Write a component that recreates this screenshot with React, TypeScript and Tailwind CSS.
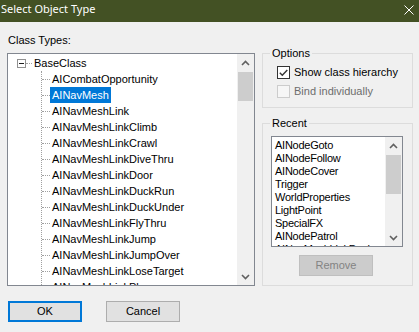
import React from "react";

const classTypes = [
  "AICombatOpportunity",
  "AINavMesh",
  "AINavMeshLink",
  "AINavMeshLinkClimb",
  "AINavMeshLinkCrawl",
  "AINavMeshLinkDiveThru",
  "AINavMeshLinkDoor",
  "AINavMeshLinkDuckRun",
  "AINavMeshLinkDuckUnder",
  "AINavMeshLinkFlyThru",
  "AINavMeshLinkJump",
  "AINavMeshLinkJumpOver",
  "AINavMeshLinkLoseTarget",
  "AINavMeshLinkPlayer",
];

const recent = [
  "AINodeGoto",
  "AINodeFollow",
  "AINodeCover",
  "Trigger",
  "WorldProperties",
  "LightPoint",
  "SpecialFX",
  "AINodePatrol",
  "AINavMeshLinkDuck",
];

const Chevron = ({ down }: { down?: boolean }) => (
  <svg width="9" height="6" viewBox="0 0 9 6">
    <polyline
      points={down ? "1,1 4.5,4.5 8,1" : "1,5 4.5,1.5 8,5"}
      fill="none"
      stroke="#606060"
      strokeWidth="1.6"
    />
  </svg>
);

// windows style vertical scrollbar, thumb placement passed in px
const ScrollBar = ({ thumbTop, thumbHeight }: { thumbTop: number; thumbHeight: number }) => (
  <div className="w-[17px] h-full bg-[#f0f0f0] flex flex-col shrink-0">
    <div className="h-[17px] flex items-center justify-center shrink-0">
      <Chevron />
    </div>
    <div className="flex-1 px-[1px]">
      <div className="bg-[#cdcdcd]" style={{ marginTop: thumbTop, height: thumbHeight }} />
    </div>
    <div className="h-[17px] flex items-center justify-center shrink-0">
      <Chevron down />
    </div>
  </div>
);

const App = () => {
  return (
    <div className="w-[419px] h-[332px] bg-[#f0f0f0] overflow-hidden flex flex-col font-['Liberation_Sans',Arial,sans-serif] text-[11px] text-black">
      {/* title bar */}
      <div className="h-[22px] bg-[#435124] flex items-center justify-between shrink-0">
        <span className="text-white text-[11px] font-['Noto_Sans',sans-serif] -mt-[3px] pl-[1px]">
          Select Object Type
        </span>
        <svg width="10" height="10" viewBox="0 0 10 10" className="mr-[5px] -mt-[3px]">
          <path d="M0.5 0.5 L9.5 9.5 M9.5 0.5 L0.5 9.5" stroke="#fff" strokeWidth="1" />
        </svg>
      </div>

      <div className="flex">
        {/* left column */}
        <div className="pl-[7px] w-[255px] flex flex-col shrink-0">
          <div className="mt-[12px] pl-[1px] h-[13px] leading-[13px]">Class Types:</div>
          <div className="mt-[6px] h-[233px] w-[248px] border border-[#828790] bg-white flex">
            <div className="flex-1 pt-[1px] overflow-hidden">
              <div className="h-[16px] flex items-center">
                <div className="ml-[9px] w-[9px] h-[9px] border border-[#919191] bg-white flex items-center justify-center">
                  <div className="w-[5px] h-[1px] bg-[#1e1e1e]" />
                </div>
                <div className="w-[6px] border-t border-dotted border-[#a0a0a0]" />
                <span className="ml-[2px] leading-[16px]">BaseClass</span>
              </div>
              <div className="ml-[33px] border-l border-dotted border-[#a0a0a0]">
                {classTypes.map((name) => (
                  <div key={name} className="h-[16px] flex items-center">
                    <div className="w-[8px] border-t border-dotted border-[#a0a0a0]" />
                    <span
                      className={`px-[2px] leading-[16px] whitespace-nowrap ${
                        name === "AINavMesh" ? "bg-[#0078d7] text-white" : ""
                      }`}
                    >
                      {name}
                    </span>
                  </div>
                ))}
              </div>
            </div>
            <ScrollBar thumbTop={1} thumbHeight={29} />
          </div>
          <div className="mt-[15px] flex gap-[24px] pl-[1px]">
            <button className="w-[74px] h-[21px] border-2 border-[#0078d7] bg-[#e1e1e1] leading-[17px]">
              OK
            </button>
            <button className="w-[74px] h-[21px] border border-[#adadad] bg-[#e1e1e1] leading-[19px]">
              Cancel
            </button>
          </div>
        </div>

        {/* right column */}
        <div className="pl-[7px] flex flex-col">
          <fieldset className="mt-[25px] w-[151px] border border-[#dcdcdc]">
            <legend className="ml-[7px] px-[2px] leading-[13px]">Options</legend>
            <div className="pl-[14px] pt-[6px] pb-[9px] flex flex-col gap-[6px]">
              <label className="flex items-center h-[13px]">
                <span className="w-[13px] h-[13px] border border-[#333] bg-white flex items-center justify-center">
                  <svg width="9" height="8" viewBox="0 0 9 8">
                    <polyline points="0.8,3.8 3.3,6.3 8.3,1" fill="none" stroke="#333" strokeWidth="1.4" />
                  </svg>
                </span>
                <span className="ml-[4px] leading-[13px]">Show class hierarchy</span>
              </label>
              <label className="flex items-center h-[13px]">
                <span className="w-[13px] h-[13px] border border-[#cccccc] bg-[#f6f6f6]" />
                <span className="ml-[4px] leading-[13px] text-[#6d6d6d]">Bind individually</span>
              </label>
            </div>
          </fieldset>

          <fieldset className="mt-[9px] w-[151px] border border-[#dcdcdc]">
            <legend className="ml-[7px] px-[2px] leading-[13px]">Recent</legend>
            <div className="pl-[8px] pt-[6px] pb-[9px]">
              <div className="w-[132px] h-[111px] border border-[#828790] bg-white flex">
                <div className="flex-1 pt-[2px] pl-[3px] overflow-hidden">
                  {recent.map((r) => (
                    <div key={r} className="h-[13px] leading-[13px] whitespace-nowrap tracking-[-0.25px]">
                      {r}
                    </div>
                  ))}
                </div>
                <ScrollBar thumbTop={1} thumbHeight={39} />
              </div>
              <button
                disabled
                className="mt-[8px] ml-[28px] w-[74px] h-[21px] border border-[#bfbfbf] bg-[#cccccc] text-[#838383] leading-[19px]"
              >
                Remove
              </button>
            </div>
          </fieldset>
        </div>
      </div>
    </div>
  );
};

export default App;
